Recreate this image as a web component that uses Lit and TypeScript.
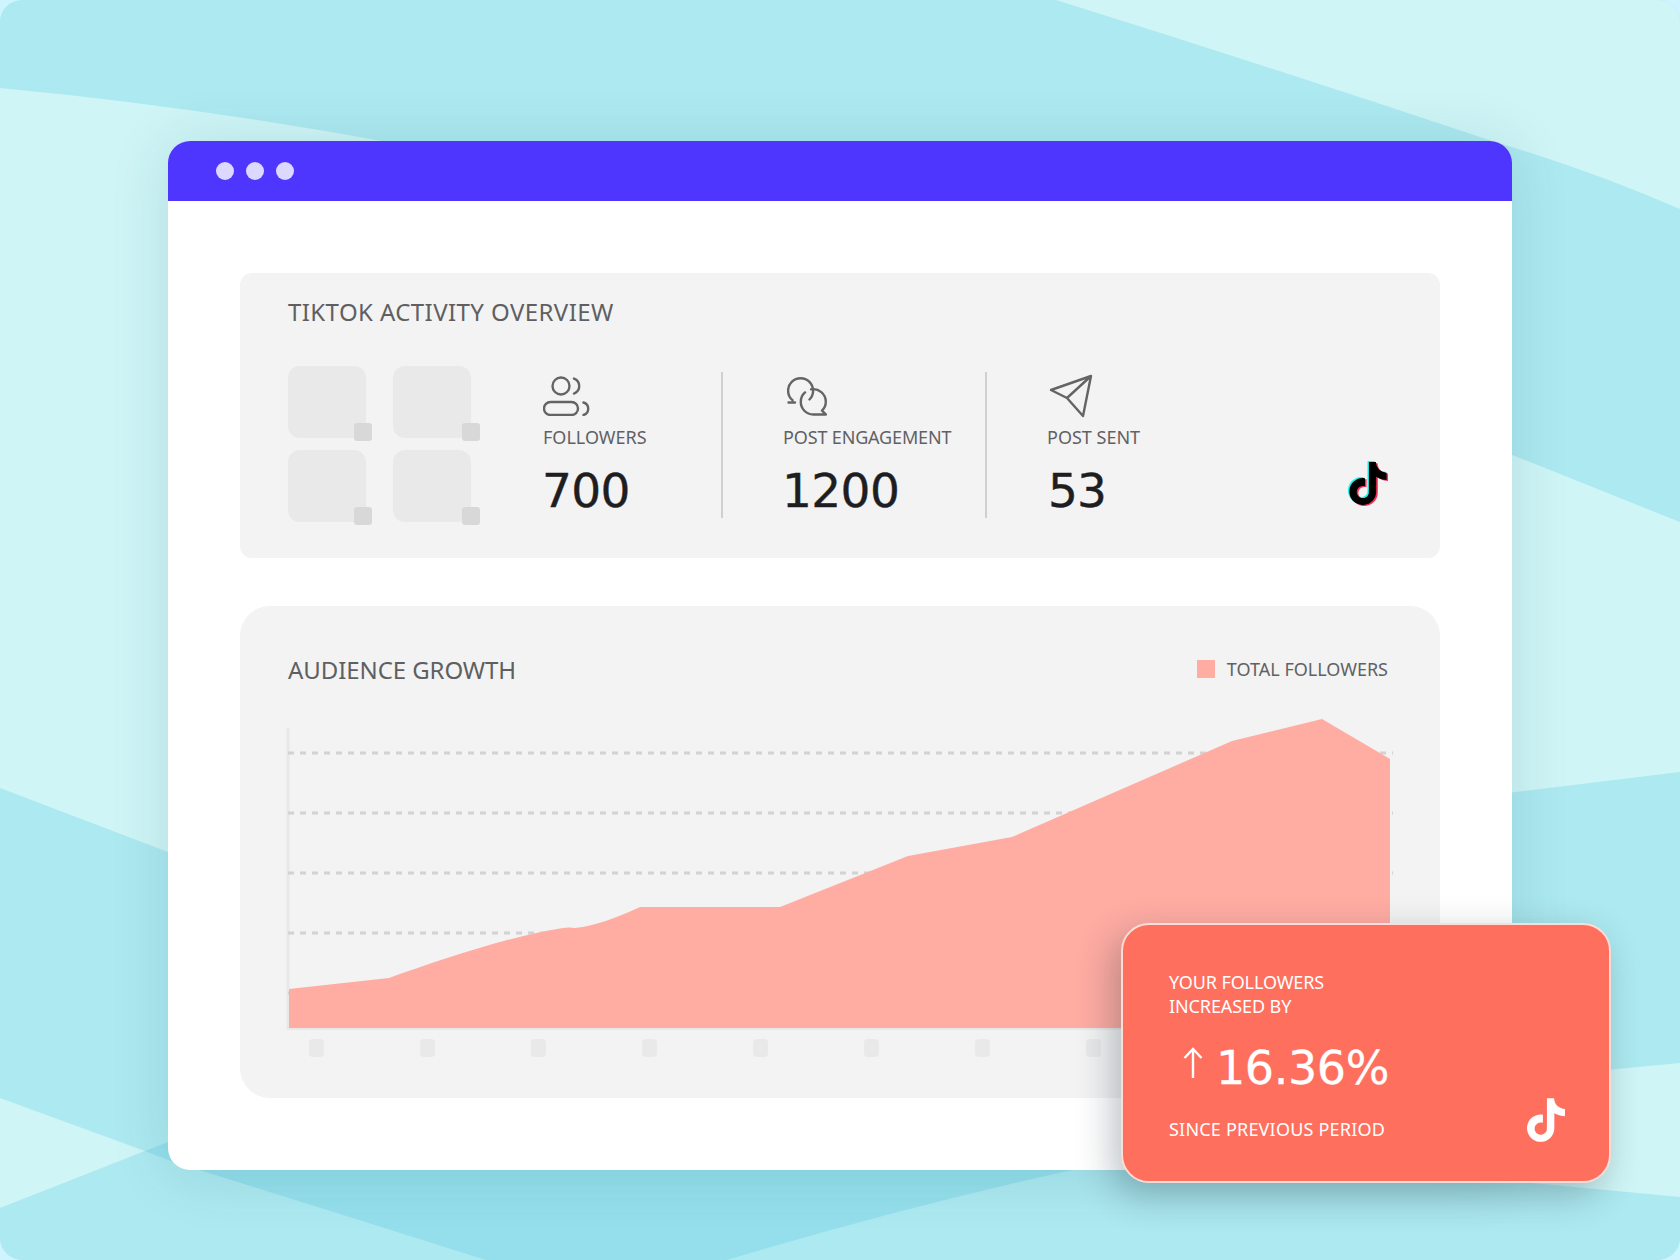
import { LitElement, css, html, svg } from 'lit'
import { customElement } from 'lit/decorators.js'

const TIKTOK = 'M12.525.02c1.31-.02 2.61-.01 3.91-.02.08 1.53.63 3.09 1.75 4.17 1.12 1.11 2.7 1.62 4.24 1.79v4.03c-1.44-.05-2.89-.35-4.2-.97-.57-.26-1.1-.59-1.62-.93-.01 2.92.01 5.84-.02 8.75-.08 1.4-.54 2.79-1.35 3.94-1.31 1.92-3.58 3.17-5.91 3.21-1.43.08-2.86-.31-4.08-1.03-2.02-1.19-3.44-3.37-3.65-5.71-.02-.5-.03-1-.01-1.49.18-1.9 1.12-3.72 2.58-4.96 1.66-1.44 3.98-2.13 6.15-1.72.02 1.48-.04 2.96-.04 4.44-.99-.32-2.15-.23-3.02.37-.63.41-1.11 1.04-1.36 1.75-.21.51-.15 1.07-.14 1.61.24 1.64 1.82 3.02 3.5 2.87 1.12-.01 2.19-.66 2.77-1.61.19-.33.4-.67.41-1.06.1-1.79.06-3.57.07-5.36.01-4.03-.01-8.05.02-12.07z'

@customElement('app-root')
export class AppRoot extends LitElement {
  static styles = css`
    :host {
      display: block;
      position: relative;
      width: 1680px;
      height: 1260px;
      overflow: hidden;
      background: #cdf4ff;
      font-family: 'Noto Sans', sans-serif;
    }
    .backdrop {
      position: absolute;
      inset: 0;
    }
    .window {
      position: absolute;
      left: 168px;
      top: 141px;
      width: 1344px;
      height: 1029px;
      background: #fff;
      border-radius: 22px;
      box-shadow: 0 4px 60px rgba(0, 70, 90, 0.14);
    }
    .titlebar {
      height: 60px;
      padding-left: 48px;
      display: flex;
      align-items: center;
      gap: 12px;
      background: #4f36ff;
      border-radius: 22px 22px 0 0;
    }
    .dot {
      width: 18px;
      height: 18px;
      border-radius: 50%;
      background: #dcd8ff;
    }
    .content {
      padding: 72px;
      display: flex;
      flex-direction: column;
      gap: 48px;
    }
    .panel {
      background: #f3f3f3;
      padding: 0 48px;
    }
    .overview {
      height: 285px;
      border-radius: 12px;
      padding-top: 24px;
      box-sizing: border-box;
    }
    .growth {
      height: 492px;
      border-radius: 30px;
      padding-top: 49px;
      box-sizing: border-box;
    }
    .heading {
      font-size: 24px;
      line-height: 30px;
      color: #5f5f62;
      letter-spacing: 0.42px;
    }
    .growth .heading {
      letter-spacing: -0.08px;
    }
    .row {
      display: flex;
      margin-top: 39px;
    }
    .thumbs {
      display: grid;
      grid-template-columns: 78px 78px;
      grid-auto-rows: 72px;
      column-gap: 27px;
      row-gap: 12px;
      width: 192px;
    }
    .thumb {
      position: relative;
      background: #e9e9e9;
      border-radius: 12px;
    }
    .thumb::after {
      content: '';
      position: absolute;
      right: -6px;
      bottom: -3px;
      width: 18px;
      height: 18px;
      border-radius: 3px;
      background: #d8d8d8;
    }
    .thumb:nth-child(even)::after {
      right: -9px;
    }
    .stat {
      height: 146px;
      margin-top: 6px;
      box-sizing: border-box;
      padding-top: 4px;
    }
    .stat svg {
      display: block;
      fill: none;
      stroke: #646466;
      stroke-width: 2.4;
      stroke-linecap: round;
      stroke-linejoin: round;
    }
    .followers {
      margin-left: 63px;
      width: 178px;
    }
    .engagement {
      width: 264px;
      padding-left: 61px;
      border-left: 2px solid #d0d0d0;
    }
    .sent {
      padding-left: 60px;
      border-left: 2px solid #d0d0d0;
    }
    .engagement svg {
      margin-left: 3px;
    }
    .sent svg {
      margin: -2px 0 -2px 2px;
    }
    .label {
      margin-top: 9px;
      font-size: 18px;
      line-height: 24px;
      color: #616164;
      white-space: nowrap;
    }
    .engagement .label {
      margin-left: -1px;
      letter-spacing: -0.15px;
    }
    .value {
      font-family: 'DejaVu Sans', sans-serif;
      font-size: 47px;
      line-height: 60px;
      margin-top: 12px;
      margin-left: -1px;
      color: #1e1e22;
      letter-spacing: -0.6px;
      -webkit-text-stroke: 0.4px #1e1e22;
    }
    .engagement .value {
      margin-left: -2px;
    }
    .sent .value {
      margin-left: 1px;
      letter-spacing: -1px;
    }
    .brand {
      margin-left: auto;
      margin-top: 95px;
      margin-right: 4px;
      display: block;
    }
    .chart-head {
      display: flex;
      justify-content: space-between;
      align-items: center;
      height: 30px;
    }
    .legend {
      display: flex;
      align-items: center;
      gap: 12px;
      padding-right: 4px;
      margin-top: -2px;
      font-size: 18px;
      line-height: 24px;
      color: #616164;
    }
    .swatch {
      width: 18px;
      height: 18px;
      background: #ffaca3;
    }
    .chart {
      display: block;
      margin: 33px 0 0 -2px;
    }
    .ticks {
      display: flex;
      gap: 96px;
      margin: 9px 0 0 21px;
    }
    .tick {
      flex: none;
      width: 15px;
      height: 18px;
      border-radius: 4px;
      background: #e9e9e9;
    }
    .callout {
      position: absolute;
      left: 1121px;
      top: 923px;
      width: 490px;
      height: 260px;
      box-sizing: border-box;
      padding: 45px 43px 0 46px;
      border: 2px solid #fbdcd7;
      border-radius: 28px;
      background: #ff6f5e;
      color: #fff;
      font-size: 18px;
      line-height: 24px;
      box-shadow: -8px 12px 36px rgba(30, 50, 60, 0.3);
    }
    .intro {
      letter-spacing: -0.1px;
    }
    .delta {
      display: flex;
      align-items: center;
      gap: 13px;
      height: 60px;
      margin: 20px 0 -1px 14px;
      font-family: 'DejaVu Sans', sans-serif;
      font-size: 46px;
      letter-spacing: -0.4px;
      -webkit-text-stroke: 0.3px #fff;
    }
    .delta svg {
      display: block;
      margin-top: -10px;
    }
    .callout-foot {
      display: flex;
      justify-content: space-between;
      align-items: flex-end;
    }
    .callout-foot span {
      padding-bottom: 2px;
      letter-spacing: 0.2px;
    }
  `

  private tiktok(w: number, h: number, coloured: boolean, cls = '') {
    return html`<svg class=${cls} width=${w} height=${h} viewBox="1 -0.6 22 25.2">
      ${coloured
        ? svg`<path d=${TIKTOK} fill="#25f4ee" transform="translate(-.8 -.6)"></path>
            <path d=${TIKTOK} fill="#fe2c55" transform="translate(.9 .6)"></path>
            <path d=${TIKTOK} fill="#000"></path>`
        : svg`<path d=${TIKTOK} fill="#fff"></path>`}
    </svg>`
  }

  render() {
    return html`
      <svg class="backdrop" width="1680" height="1260" viewBox="0 0 1680 1260">
        <rect width="1680" height="1260" rx="22" fill="#ade9f0"></rect>
        <g fill="#cff5f6">
          <path d="M0 88Q190 106 382 141L400 400 168 852 0 788Z"></path>
          <path d="M1056 0Q1280 70 1492 141 1590 170 1680 209V22A22 22 0 0 0 1658 0Z"></path>
          <path d="M1450 430 1680 522V772L1450 800Z"></path>
          <path d="M1500 1080 1680 1063V1197L1500 1180Z"></path>
          <path d="M0 1098 145 1151 0 1208Z"></path>
        </g>
        <path d="M145 1151 168 1142H1120L1072 1170Q900 1208 727 1260H486L168 1160Z" fill="#94dfeb"></path>
      </svg>

      <div class="window">
        <div class="titlebar">
          <span class="dot"></span><span class="dot"></span><span class="dot"></span>
        </div>
        <div class="content">
          <section class="panel overview">
            <div class="heading">TIKTOK ACTIVITY OVERVIEW</div>
            <div class="row">
              <div class="thumbs">
                <div class="thumb"></div>
                <div class="thumb"></div>
                <div class="thumb"></div>
                <div class="thumb"></div>
              </div>
              <div class="stat followers">
                <svg width="48" height="40" viewBox="0 0 48 40">
                  <circle cx="18" cy="10" r="8.500"></circle>
                  <rect x="1" y="26" width="34" height="13" rx="6.5"></rect>
                  <path d="M31 2.500a8 8 0 0 1 0 15M40.500 26.500a6.500 6.500 0 0 1 0 12.500"></path>
                </svg>
                <div class="label">FOLLOWERS</div>
                <div class="value">700</div>
              </div>
              <div class="stat engagement">
                <svg width="40" height="40" viewBox="0 0 40 40">
                  <path d="M1.500 26.500H8M5.500 24.200A12.500 12.500 0 0 1 1.100 14.700 12.500 12.500 0 0 1 26.100 14.700 12.500 12.500 0 0 1 22.500 23.500"></path>
                  <path d="M24 13.400A12.500 12.500 0 0 1 38.800 25.700 12.500 12.500 0 0 1 35 34.700L39 38.500H26.300A12.500 12.500 0 0 1 13.800 25.700 12.500 12.500 0 0 1 18 16.400"></path>
                </svg>
                <div class="label">POST ENGAGEMENT</div>
                <div class="value">1200</div>
              </div>
              <div class="stat sent">
                <svg width="44" height="44" viewBox="0 0 44 44">
                  <path d="M2 16 42 2 34 42 18 24ZM42 2 18 24"></path>
                </svg>
                <div class="label">POST SENT</div>
                <div class="value">53</div>
              </div>
              ${this.tiktok(40, 45, true, 'brand')}
            </div>
          </section>

          <section class="panel growth">
            <div class="chart-head">
              <div class="heading">AUDIENCE GROWTH</div>
              <div class="legend"><span class="swatch"></span>TOTAL FOLLOWERS</div>
            </div>
            <svg class="chart" width="1110" height="312" viewBox="286 718 1110 312">
              <path d="M288 728V1029H1392" fill="none" stroke="#e8e8e8" stroke-width="3"></path>
              <g stroke="#d2d2d2" stroke-width="3" stroke-dasharray="6 6">
                ${[753, 813, 873, 933, 993].map(
                  (y) => svg`<line x1="288" x2="1393" y1=${y} y2=${y}></line>`
                )}
              </g>
              <path
                d="M289 989 389 978C440 960 510 936 563 928Q569 927 575 928C596 926 618 917 640 907L780 907 908 856 1012 837 1232 741 1322 719 1390 759V1028H289Z"
                fill="#ffaca3"
              ></path>
            </svg>
            <div class="ticks">
              ${Array.from({ length: 10 }, () => html`<span class="tick"></span>`)}
            </div>
          </section>
        </div>
      </div>

      <aside class="callout">
        <div class="intro">YOUR FOLLOWERS<br />INCREASED BY</div>
        <div class="delta">
          <svg width="20" height="32" viewBox="0 0 20 32" fill="none" stroke="#fff" stroke-width="2.4">
            <path d="M10 31V2M1.500 11 10 2l8.500 9"></path>
          </svg>
          <span>16.36%</span>
        </div>
        <div class="callout-foot">
          <span>SINCE PREVIOUS PERIOD</span>
          ${this.tiktok(40, 46, false)}
        </div>
      </aside>
    `
  }
}
